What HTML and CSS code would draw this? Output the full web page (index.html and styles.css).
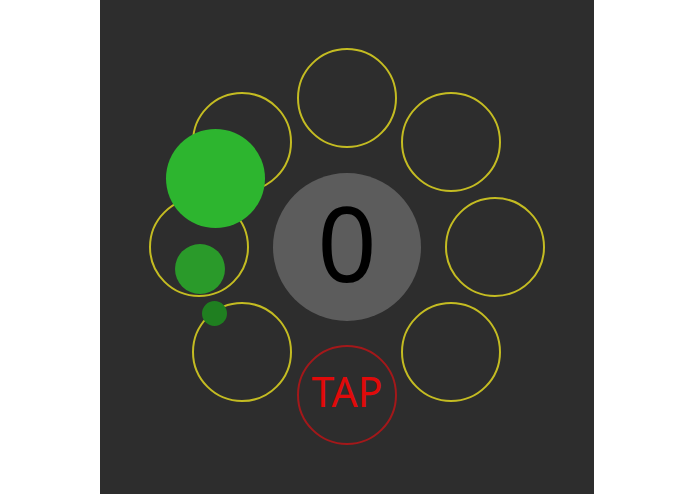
FILE: index.html
```html
<!DOCTYPE html>
<html>
<head>
<meta charset="utf-8">
<link rel="stylesheet" href="styles.css">
</head>
<body>
<div class="board">
  <div class="slot s-top"></div>
  <div class="slot s-tr"></div>
  <div class="slot s-right"></div>
  <div class="slot s-br"></div>
  <div class="slot s-bl"></div>
  <div class="slot s-left"></div>
  <div class="slot s-tl"></div>
  <div class="tap">TAP</div>
  <div class="counter">0</div>
  <div class="dot dot-big"></div>
  <div class="dot dot-mid"></div>
  <div class="dot dot-small"></div>
</div>
</body>
</html>
```
FILE: styles.css
```css
html, body {
  margin: 0;
  padding: 0;
  background: #ffffff;
}
body {
  width: 695px;
  height: 494px;
  display: flex;
  justify-content: flex-start;
  padding-left: 100px;
  box-sizing: border-box;
  font-family: "Noto Sans", Roboto, sans-serif;
}
.board {
  position: relative;
  width: 494px;
  height: 494px;
  background: #2d2d2d;
}
.slot, .tap {
  position: absolute;
  width: 96px;
  height: 96px;
  border-radius: 50%;
  border: 2px solid #c4bc22;
}
/* centre of board (247,247); ring radius 148 */
.s-top   { left: 197px; top: 48px; }
.s-tr    { left: 301px; top: 92px; }
.s-right { left: 345px; top: 197px; }
.s-br    { left: 301px; top: 302px; }
.s-bl    { left: 92px;  top: 302px; }
.s-left  { left: 49px;  top: 197px; }
.s-tl    { left: 92px;  top: 92px; }
.tap {
  left: 197px;
  top: 345px;
  box-sizing: border-box;
  width: 100px;
  height: 100px;
  padding-bottom: 7px;
  border-color: #a3181a;
  display: flex;
  align-items: center;
  justify-content: center;
  color: #e00a0a;
  font-size: 41px;
  line-height: 1;
}
.counter {
  position: absolute;
  left: 173px;
  top: 173px;
  width: 148px;
  height: 148px;
  box-sizing: border-box;
  padding-bottom: 10px;
  border-radius: 50%;
  background: #5c5c5c;
  color: #000000;
  font-size: 104px;
  line-height: 1;
  display: flex;
  align-items: center;
  justify-content: center;
}
.dot {
  position: absolute;
  border-radius: 50%;
}
.dot-big {
  left: 66px;
  top: 129px;
  width: 99px;
  height: 99px;
  background: #2db52f;
}
.dot-mid {
  left: 75px;
  top: 244px;
  width: 50px;
  height: 50px;
  background: #2a9a2a;
}
.dot-small {
  left: 102px;
  top: 301px;
  width: 25px;
  height: 25px;
  background: #1f7f20;
}
```
